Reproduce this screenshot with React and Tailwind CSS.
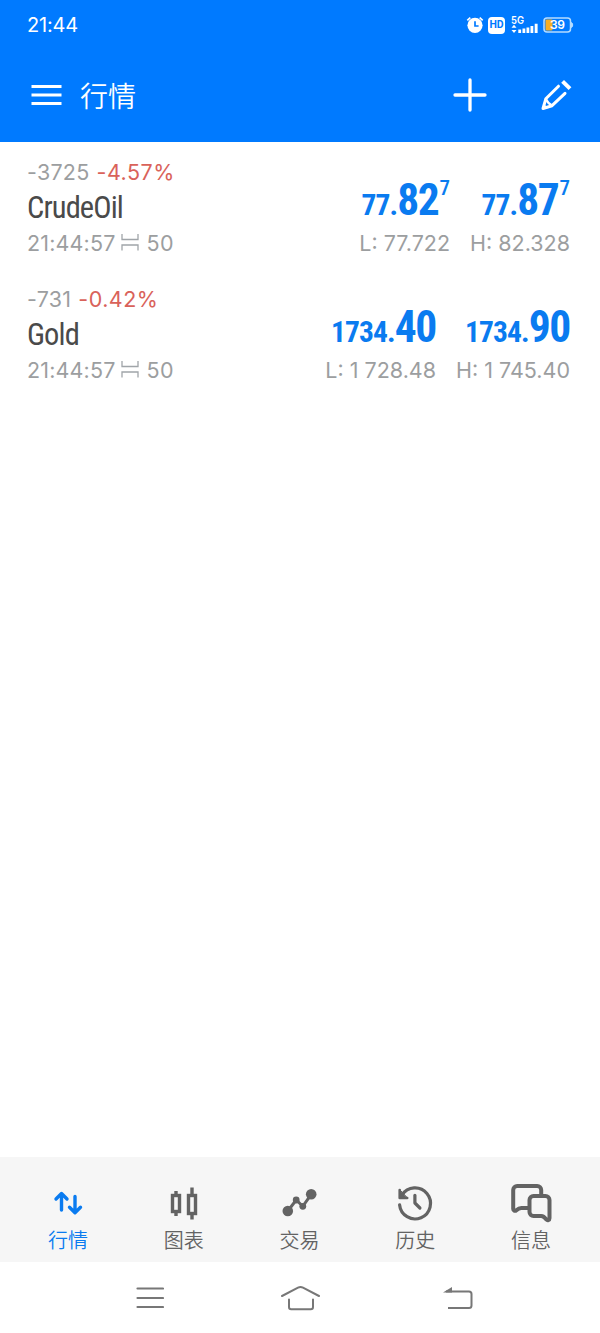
import clsx from 'clsx'

const quotes = [
  {
    symbol: 'CrudeOil',
    points: '-3725',
    percent: '-4.57%',
    time: '21:44:57',
    spread: 50,
    bid: { small: '77.', big: '82', sup: '7', label: 'L: 77.722' },
    ask: { small: '77.', big: '87', sup: '7', label: 'H: 82.328' },
  },
  {
    symbol: 'Gold',
    points: '-731',
    percent: '-0.42%',
    time: '21:44:57',
    spread: 50,
    bid: { small: '1734.', big: '40', label: 'L: 1 728.48' },
    ask: { small: '1734.', big: '90', label: 'H: 1 745.40' },
  },
]

const QuotesIcon = () => (
  <g strokeWidth="3.4" strokeLinecap="round" strokeLinejoin="round">
    <path d="M17.5 27V10.500M12 16l5.500-5.500 5.500 5.500" />
    <path d="M31 13.500v16M25.500 24.200l5.500 5.500 5.500-5.500" />
  </g>
)

const ChartIcon = () => (
  <g strokeWidth="3.4">
    <rect x="12.5" y="12.5" width="7" height="16" />
    <path d="M16 8v4M16 29v4" />
    <rect x="28.5" y="12.5" width="7" height="18" />
    <path d="M32 4.500v8M32 31v5.500" />
  </g>
)

const TradeIcon = () => (
  <g>
    <path d="M12.800 28l8.400-11 6.600 6.300 8.400-12" strokeWidth="3" />
    <g fill="currentColor" stroke="none">
      <circle cx="12.8" cy="28" r="5.3" />
      <circle cx="21.2" cy="17" r="3.4" />
      <circle cx="27.8" cy="23.3" r="3.4" />
      <circle cx="36.2" cy="11.3" r="5.3" />
    </g>
  </g>
)

const HistoryIcon = () => (
  <g strokeWidth="3.2" strokeLinecap="round" strokeLinejoin="round">
    <path d="M11 12A15.500 15.500 0 1 1 8.600 21.900" />
    <path d="M8.700 7v8h7.500z" fill="currentColor" strokeWidth="1" />
    <path d="M8.700 7v8h7.500" strokeWidth="2.6" />
    <path d="M23.900 12.300V20l5 5" />
  </g>
)

const MessagesIcon = () => (
  <g strokeWidth="4" strokeLinejoin="round">
    <path d="M34.200 12V7a4 4 0 0 0-4-4h-20a4 4 0 0 0-4 4v19c0 2 2 2.300 3.200 1.200 1.800-1.700 3-2.200 5-2.200H22" />
    <path d="M26.500 13h12a4 4 0 0 1 4 4v18.200c0 2-2 2.500-3.300 1.200C37.900 34.500 36.500 33 34.200 33h-7.700a4 4 0 0 1-4-4V17a4 4 0 0 1 4-4z" />
  </g>
)

const tabs = [
  { name: '行情', Icon: QuotesIcon, active: true },
  { name: '图表', Icon: ChartIcon },
  { name: '交易', Icon: TradeIcon },
  { name: '历史', Icon: HistoryIcon },
  { name: '信息', Icon: MessagesIcon },
]

const StatusBar = () => (
  <div className="flex h-[50px] items-center justify-between pl-[27px] pr-[26px]">
    <span className="text-[20px] tracking-[-0.2px]">21:44</span>
    <div className="flex items-center">
      <svg width="18" height="18" viewBox="0 0 18 18">
        <circle cx="9" cy="9.3" r="7.6" fill="#fff" />
        <path d="M1.300 4.400l3-2.800M16.700 4.400l-3-2.800" stroke="#fff" strokeWidth="1.7" />
        <path d="M9 5.300v4.700h3.600" fill="none" stroke="#007aff" strokeWidth="1.7" />
      </svg>
      <span className="ml-1 flex h-[17px] w-[17px] items-center justify-center rounded-[4px] bg-white font-['Roboto'] text-[10.5px] font-bold text-[#007aff]">
        HD
      </span>
      <svg className="ml-1.5" width="28" height="24" viewBox="0 -3 28 24" fill="#fff">
        <text x="0" y="7.6" fontSize="10.5" fontWeight="600" textLength="13" lengthAdjust="spacingAndGlyphs">5G</text>
        <path d="M3 8.800l2.500 3h-5zM3 17l2.500-3h-5zM7.300 13.500h2.800V17H7.300zM11.500 12.500h2.800V17h-2.800zM15.500 11.500h2.800V17h-2.800zM19.500 10h2.800v7h-2.800zM23.700 7.800h2.900V17h-2.900z" />
      </svg>
      <svg className="ml-1" width="31" height="16" viewBox="0 0 31 16">
        <rect x="1" y="1" width="26.5" height="14" rx="3" fill="none" stroke="#b5dcff" strokeWidth="1.5" />
        <rect x="2.5" y="2.5" width="7" height="11" rx="1" fill="#f5ad22" />
        <path d="M28.500 5.500c1.600.6 1.600 4.400 0 5z" fill="#b5dcff" stroke="#b5dcff" />
        <text x="7" y="12.3" fontSize="12" fontWeight="600" fill="#fff" textLength="15">39</text>
      </svg>
    </div>
  </div>
)

const Header = () => (
  <header className="h-[141.5px] bg-[#007aff] text-white">
    <StatusBar />
    <div className="flex h-[91px] items-center pb-px pl-[31px] pr-[28px]">
      <svg width="31" height="20" viewBox="0 0 31 20" stroke="#fff" strokeWidth="3">
        <path d="M.5 1.500h30M.5 10h30M.5 18.500h30" />
      </svg>
      <h1 className="ml-[18px] pt-[3px] text-[28px] leading-none font-[350]">行情</h1>
      <svg className="ml-auto" width="34" height="34" viewBox="0 0 34 34" stroke="#fff" strokeWidth="3.3" strokeLinecap="round">
        <path d="M17 2v30M2 17h30" />
      </svg>
      <svg
        className="ml-[53px]"
        width="32"
        height="32"
        viewBox="0 0 32 32"
        fill="none"
        stroke="#fff"
        strokeWidth="3"
        strokeLinecap="round"
        strokeLinejoin="round"
      >
        <path d="M18.500 7.200L5.800 19.800 3 29.500l9-2.800L25 14.300" />
        <path d="M6 20.300q2.500 4.800 5.500 5.800" strokeWidth="2.4" />
        <path d="M3.500 24.500L8 29l-5 1z" fill="#fff" stroke="none" />
        <path d="M22.600 2.300l7.400 7.400" strokeWidth="4" strokeLinecap="butt" />
      </svg>
    </div>
  </header>
)

const SpreadIcon = () => (
  <svg width="18" height="18" viewBox="0 0 18 18" fill="none" stroke="#a0a5a9" strokeWidth="1.3">
    <path d="M1 0v5.500h16V0M1 16.500V11h16v5.500" />
  </svg>
)

const Price = ({ small, big, sup, label }) => (
  <div className="flex flex-col items-end">
    <div className="mt-[34px] flex h-[50px] items-baseline font-['Roboto_Condensed','Roboto'] font-stretch-condensed leading-[50px] font-bold text-[#0a7bf0]">
      <span className="text-[29.5px] tracking-[-0.9px]">{small}</span>
      <span className="text-[43.5px] tracking-[-1.3px]">{big}</span>
      {sup && <span className="relative -top-[20px] ml-[1px] text-[21px] font-medium">{sup}</span>}
    </div>
    <div className="mt-[2px] text-[21.5px] leading-[30px] whitespace-pre text-[#9c9ea0]">{label}</div>
  </div>
)

const QuoteRow = ({ quote }) => (
  <div className="flex h-[127px] justify-between pl-[27px] pr-[30px]">
    <div className="text-[21.5px] text-[#9c9ea0]">
      <div className="mt-[15px] flex gap-[7px] leading-[30px]">
        <span className="tracking-[0.25px]">{quote.points}</span>
        <span className="tracking-[0.5px] text-[#d9625a]">{quote.percent}</span>
      </div>
      <div className="mt-[3px] font-['Roboto_Condensed','Roboto'] font-stretch-condensed text-[30.5px] leading-[36px] tracking-[-0.9px] text-[#4a4a4a]">
        {quote.symbol}
      </div>
      <div className="mt-[2px] flex items-center leading-[30px]">
        <span className="tracking-[0.15px]">{quote.time}</span>
        <span className="mr-[7px] ml-[6px]">
          <SpreadIcon />
        </span>
        <span className="tracking-[0.4px]">{quote.spread}</span>
      </div>
    </div>
    <div className="flex gap-5">
      <Price {...quote.bid} />
      <Price {...quote.ask} />
    </div>
  </div>
)

const TabBar = () => (
  <nav className="flex h-[105px] bg-[#f6f6f6] pr-[11px] pl-[10px]">
    {tabs.map(({ name, Icon, active }) => (
      <div
        key={name}
        className={clsx('flex flex-1 flex-col items-center pt-[25.5px]', active ? 'text-[#0a7bf0]' : 'text-[#636363]')}
      >
        <svg width="48" height="40" viewBox="0 0 48 40" fill="none" stroke="currentColor">
          <Icon />
        </svg>
        <span className="mt-[7.5px] text-[20px] leading-[22px] font-[350]">{name}</span>
      </div>
    ))}
  </nav>
)

const SystemNav = () => (
  <div className="flex h-[71px] items-center bg-white pt-px pl-[135px] text-[#777]">
    <svg width="29" height="24" viewBox="0 0 29 24" fill="none" stroke="currentColor" strokeWidth="2.2" strokeLinecap="round">
      <path d="M2.500 2.500h25.500M2.500 12h25.500M2.500 21h25.500" />
    </svg>
    <svg className="ml-[116px]" width="41" height="26" viewBox="0 0 41 26" fill="none" stroke="currentColor" strokeWidth="2" strokeLinecap="round">
      <path d="M2 11L18 2.600q2.500-1.200 5 0L39 11" />
      <path d="M9 14.500V22q0 2.200 2.200 2.200h19.600q2.200 0 2.200-2.200v-7.500" />
    </svg>
    <svg className="ml-[122px]" width="31" height="26" viewBox="0 0 31 26" fill="none" stroke="currentColor" strokeWidth="2">
      <path d="M3 6.500h23q2.500 0 2.500 2.500v11.500q0 2.500-2.500 2.500H5" />
      <path d="M0 7.500l9-5.500v5.500z" fill="currentColor" stroke="none" />
    </svg>
  </div>
)

const App = () => (
  <div className="flex h-[1333px] w-[600px] flex-col overflow-hidden bg-white font-['Inter','Noto_Sans_CJK_SC',sans-serif]">
    <Header />
    <main className="flex-1">
      {quotes.map((quote) => (
        <QuoteRow key={quote.symbol} quote={quote} />
      ))}
    </main>
    <TabBar />
    <SystemNav />
  </div>
)

export default App
